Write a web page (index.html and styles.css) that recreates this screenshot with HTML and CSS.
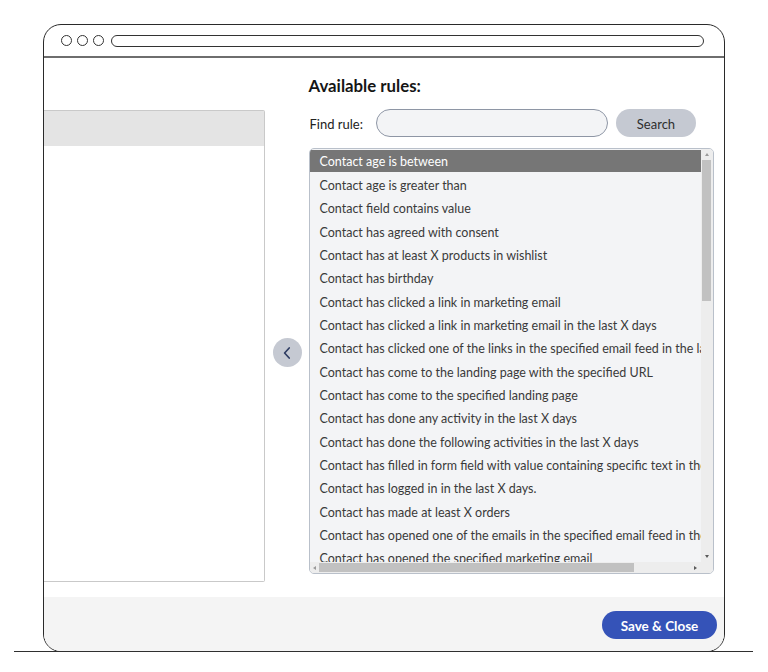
FILE: index.html
```html
<!DOCTYPE html>
<html lang="en">
<head>
<meta charset="utf-8">
<title>Available rules</title>
<link rel="stylesheet" href="styles.css">
</head>
<body>
<div class="stage">
  <div class="window">
    <div class="chrome">
      <span class="dot"></span><span class="dot"></span><span class="dot"></span>
      <span class="address"></span>
    </div>
    <div class="separator"></div>
    <div class="content">
      <div class="left-panel">
        <div class="left-head"></div>
        <div class="left-body"></div>
      </div>
      <button class="mover" type="button" aria-label="Move left">
        <svg width="10" height="14" viewBox="0 0 10 14"><path d="M7.2 2 L2.6 7 L7.2 12" fill="none" stroke="#2f3d63" stroke-width="1.7" stroke-linecap="round" stroke-linejoin="round"/></svg>
      </button>
      <div class="right">
        <h2 class="title">Available rules:</h2>
        <div class="find-row">
          <label class="find-label">Find rule:</label>
          <input class="find-input" type="text">
          <button class="search-btn" type="button">Search</button>
        </div>
        <div class="listbox">
          <div class="viewport">
            <div class="item selected">Contact age is between</div>
            <div class="item">Contact age is greater than</div>
            <div class="item">Contact field contains value</div>
            <div class="item">Contact has agreed with consent</div>
            <div class="item">Contact has at least X products in wishlist</div>
            <div class="item">Contact has birthday</div>
            <div class="item">Contact has clicked a link in marketing email</div>
            <div class="item">Contact has clicked a link in marketing email in the last X days</div>
            <div class="item">Contact has clicked one of the links in the specified email feed in the last X days</div>
            <div class="item">Contact has come to the landing page with the specified URL</div>
            <div class="item">Contact has come to the specified landing page</div>
            <div class="item">Contact has done any activity in the last X days</div>
            <div class="item">Contact has done the following activities in the last X days</div>
            <div class="item">Contact has filled in form field with value containing specific text in the last X days</div>
            <div class="item">Contact has logged in in the last X days.</div>
            <div class="item">Contact has made at least X orders</div>
            <div class="item">Contact has opened one of the emails in the specified email feed in the last X days</div>
            <div class="item">Contact has opened the specified marketing email</div>
            <div class="item">Contact has opened the specified marketing email in the last X days</div>
          </div>
          <div class="vscroll">
            <span class="arr arr-up"></span>
            <span class="vthumb"></span>
            <span class="arr arr-down"></span>
          </div>
          <div class="hscroll">
            <span class="arr arr-left"></span>
            <span class="hthumb"></span>
            <span class="arr arr-right"></span>
          </div>
          <div class="corner"></div>
        </div>
      </div>
    </div>
    <div class="footer">
      <button class="save-btn" type="button">Save &amp; Close</button>
    </div>
  </div>
  <div class="baseline"></div>
</div>
</body>
</html>
```

FILE: styles.css
```css
* { box-sizing: border-box; }

html, body {
  margin: 0;
  padding: 0;
  background: #ffffff;
}

body {
  font-family: Lato, "Open Sans", Arial, sans-serif;
  color: #333333;
  width: 768px;
  height: 672px;
  overflow: hidden;
}

.stage {
  padding-top: 24px;
}

.window {
  margin-left: 43px;
  width: 682px;
  height: 628px;
  border: 1.5px solid #2a2a2a;
  border-radius: 18px;
  overflow: hidden;
  display: flex;
  flex-direction: column;
  background: #ffffff;
}

.baseline {
  margin-left: 14px;
  margin-top: -1.5px;
  width: 739px;
  height: 1.5px;
  background: #2f2f2f;
}

.chrome {
  height: 31px;
  flex: none;
  display: flex;
  align-items: center;
  padding-left: 16.5px;
  gap: 4.5px;
}

.dot {
  width: 11.5px;
  height: 11.5px;
  border: 1.4px solid #333333;
  border-radius: 50%;
}

.address {
  margin-left: 2px;
  width: 593px;
  height: 12px;
  border: 1.4px solid #333333;
  border-radius: 6px;
}

.separator {
  height: 2px;
  flex: none;
  background: #6e6e6e;
}

.content {
  flex: 1;
  display: flex;
  align-items: flex-start;
}

.left-panel {
  width: 220.5px;
  height: 472px;
  margin-top: 51.5px;
  border: 1.5px solid #c9c9c9;
  border-left: none;
  border-radius: 0 2px 2px 0;
  display: flex;
  flex-direction: column;
  flex: none;
}

.left-head {
  height: 35px;
  background: #e4e4e4;
}

.left-body {
  flex: 1;
  background: #ffffff;
}

.mover {
  flex: none;
  width: 29px;
  height: 29px;
  margin-left: 8px;
  margin-top: 280px;
  padding: 0;
  border: none;
  border-radius: 50%;
  background: #c5c9d2;
  display: flex;
  align-items: center;
  justify-content: center;
}

.right {
  flex: none;
  width: 405px;
  margin-left: 7px;
  margin-top: 18px;
}

.title {
  margin: 0;
  font-size: 16.8px;
  line-height: 20px;
  font-weight: 700;
  color: #151515;
}

.find-row {
  margin-top: 13px;
  display: flex;
  align-items: center;
  height: 28px;
}

.find-label {
  margin-left: 1px;
  margin-top: 1px;
  font-size: 13px;
  color: #222222;
}

.find-input {
  margin-left: 13px;
  width: 232px;
  height: 28px;
  border: 1.5px solid #8e96a5;
  border-radius: 14px;
  background: #f3f4f6;
  outline: none;
  font-family: inherit;
}

.search-btn {
  margin-left: 8px;
  width: 80px;
  height: 28px;
  border: none;
  border-radius: 14px;
  background: #c5c9d2;
  color: #2e2e2e;
  font-family: inherit;
  font-size: 13px;
  padding: 1px 0 0;
}

.listbox {
  margin-top: 11px;
  height: 426px;
  border: 1.5px solid #b9c0ca;
  border-radius: 5px;
  background: #f3f4f6;
  overflow: hidden;
  display: grid;
  grid-template-columns: 1fr 11.5px;
  grid-template-rows: 1fr 11px;
}

.viewport {
  overflow: hidden;
  padding-top: 0.5px;
}

.item {
  height: 23.35px;
  line-height: 23.35px;
  padding-left: 10px;
  padding-top: 1px;
  font-size: 12.5px;
  color: #3a3a3a;
  white-space: nowrap;
}

.item.selected {
  background: #767676;
  color: #ffffff;
  height: 22.5px;
  line-height: 21.5px;
  margin-bottom: 0.85px;
}

.vscroll {
  background: #ededed;
  display: flex;
  flex-direction: column;
  align-items: center;
}

.vthumb {
  margin-top: 1px;
  width: 9px;
  height: 141px;
  background: #c1c1c1;
}

.hscroll {
  background: #ededed;
  display: flex;
  align-items: center;
}

.hthumb {
  margin-left: 3px;
  width: 315px;
  height: 9px;
  background: #c1c1c1;
}

.corner {
  background: #ededed;
}

.arr {
  width: 0;
  height: 0;
  flex: none;
}

.arr-up {
  margin-top: 4px;
  border-left: 2.5px solid transparent;
  border-right: 2.5px solid transparent;
  border-bottom: 3px solid #9a9a9a;
  margin-bottom: 3px;
}

.arr-down {
  margin-top: auto;
  margin-bottom: 4px;
  border-left: 2.5px solid transparent;
  border-right: 2.5px solid transparent;
  border-top: 3px solid #5a5a5a;
}

.arr-left {
  margin-left: 3px;
  border-top: 2.5px solid transparent;
  border-bottom: 2.5px solid transparent;
  border-right: 3px solid #9a9a9a;
}

.arr-right {
  margin-left: auto;
  margin-right: 4px;
  border-top: 2.5px solid transparent;
  border-bottom: 2.5px solid transparent;
  border-left: 3px solid #5a5a5a;
}

.footer {
  flex: none;
  height: 54px;
  background: #f4f4f4;
  display: flex;
  justify-content: flex-end;
  align-items: flex-start;
  padding-top: 14px;
  padding-right: 7px;
}

.save-btn {
  width: 115px;
  height: 28px;
  border: none;
  border-radius: 14px;
  background: #3553b8;
  color: #ffffff;
  font-family: inherit;
  font-size: 13.5px;
  font-weight: 700;
  padding: 1px 0 0;
}
```
